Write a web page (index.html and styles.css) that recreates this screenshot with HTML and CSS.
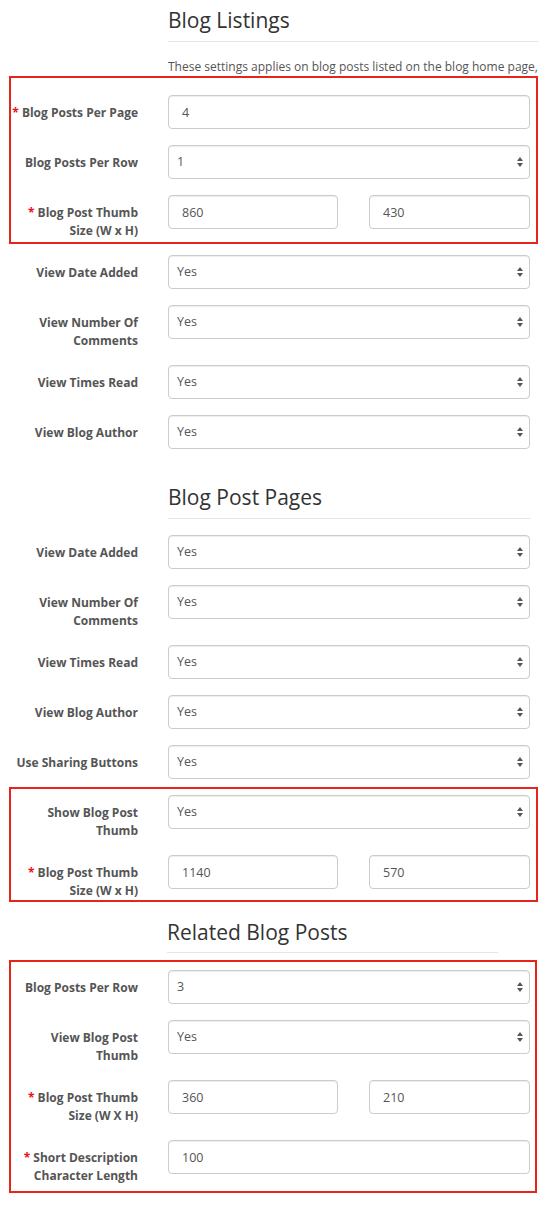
FILE: index.html
```html
<!DOCTYPE html>
<html lang="en">
<head>
<meta charset="utf-8">
<title>Blog Settings</title>
<link rel="stylesheet" href="styles.css">
</head>
<body>
<div class="page">

  <div class="head head-1">
    <h2 class="title">Blog Listings</h2>
    <p class="desc">These settings applies on blog posts listed on the blog home page,</p>
  </div>

  <div class="form">
    <div class="mark mark-1">
      <div class="row">
        <label class="lbl"><span class="req">*</span> Blog Posts Per Page</label>
        <div class="ctl"><input class="field" type="text" value="4"></div>
      </div>
      <div class="row">
        <label class="lbl">Blog Posts Per Row</label>
        <div class="ctl"><span class="sel"><select class="field select"><option>1</option></select></span></div>
      </div>
      <div class="row">
        <label class="lbl"><span class="req">*</span> Blog Post Thumb Size (W x H)</label>
        <div class="ctl pair"><input class="field" type="text" value="860"><input class="field" type="text" value="430"></div>
      </div>
    </div>
    <div class="row">
      <label class="lbl">View Date Added</label>
      <div class="ctl"><span class="sel"><select class="field select"><option>Yes</option></select></span></div>
    </div>
    <div class="row">
      <label class="lbl">View Number Of Comments</label>
      <div class="ctl"><span class="sel"><select class="field select"><option>Yes</option></select></span></div>
    </div>
    <div class="row">
      <label class="lbl">View Times Read</label>
      <div class="ctl"><span class="sel"><select class="field select"><option>Yes</option></select></span></div>
    </div>
    <div class="row">
      <label class="lbl">View Blog Author</label>
      <div class="ctl"><span class="sel"><select class="field select"><option>Yes</option></select></span></div>
    </div>
  </div>

  <div class="head head-2">
    <h2 class="title">Blog Post Pages</h2>
  </div>

  <div class="form">
    <div class="row">
      <label class="lbl">View Date Added</label>
      <div class="ctl"><span class="sel"><select class="field select"><option>Yes</option></select></span></div>
    </div>
    <div class="row">
      <label class="lbl">View Number Of Comments</label>
      <div class="ctl"><span class="sel"><select class="field select"><option>Yes</option></select></span></div>
    </div>
    <div class="row">
      <label class="lbl">View Times Read</label>
      <div class="ctl"><span class="sel"><select class="field select"><option>Yes</option></select></span></div>
    </div>
    <div class="row">
      <label class="lbl">View Blog Author</label>
      <div class="ctl"><span class="sel"><select class="field select"><option>Yes</option></select></span></div>
    </div>
    <div class="row">
      <label class="lbl">Use Sharing Buttons</label>
      <div class="ctl"><span class="sel"><select class="field select"><option>Yes</option></select></span></div>
    </div>
    <div class="mark mark-2">
      <div class="row">
        <label class="lbl">Show Blog Post Thumb</label>
        <div class="ctl"><span class="sel"><select class="field select"><option>Yes</option></select></span></div>
      </div>
      <div class="row">
        <label class="lbl"><span class="req">*</span> Blog Post Thumb Size (W x H)</label>
        <div class="ctl pair"><input class="field" type="text" value="1140"><input class="field" type="text" value="570"></div>
      </div>
    </div>
  </div>

  <div class="head head-3">
    <h2 class="title">Related Blog Posts</h2>
  </div>

  <div class="form">
    <div class="mark mark-3">
      <div class="row">
        <label class="lbl">Blog Posts Per Row</label>
        <div class="ctl"><span class="sel"><select class="field select"><option>3</option></select></span></div>
      </div>
      <div class="row">
        <label class="lbl">View Blog Post Thumb</label>
        <div class="ctl"><span class="sel"><select class="field select"><option>Yes</option></select></span></div>
      </div>
      <div class="row">
        <label class="lbl"><span class="req">*</span> Blog Post Thumb Size (W X H)</label>
        <div class="ctl pair"><input class="field" type="text" value="360"><input class="field" type="text" value="210"></div>
      </div>
      <div class="row">
        <label class="lbl"><span class="req">*</span> Short Description Character Length</label>
        <div class="ctl"><input class="field" type="text" value="100"></div>
      </div>
    </div>
  </div>

</div>
</body>
</html>
```

FILE: styles.css
```css
* { box-sizing: border-box; }

html, body {
  margin: 0;
  padding: 0;
  background: #fff;
}

body {
  font-family: "Open Sans", "Noto Sans", "Liberation Sans", sans-serif;
  color: #555;
}

.page {
  width: 543px;
  min-height: 1208px;
  overflow: hidden;
}

/* section headers */
.head {
  padding-left: 168px;
}

.title {
  margin: 0;
  font-size: 21px;
  font-weight: 400;
  line-height: 28px;
  color: #333;
  padding-bottom: 7px;
  border-bottom: 1px solid #e5e5e5;
}

.head-1 {
  padding-top: 6px;
  width: 538px;
  margin-bottom: 19px;
}

.desc {
  margin: 16px 0 0;
  font-size: 12px;
  line-height: 18px;
  color: #555;
  white-space: nowrap;
}

.head-2 {
  width: 530px;
  margin-top: 34px;
  margin-bottom: 16px;
}

.head-3 {
  width: 498px;
  padding-left: 167px;
  margin-top: 19px;
  margin-bottom: 17px;
}
.head-3 .title { padding-bottom: 6px; }

/* form rows */
.form,
.mark {
  display: flex;
  flex-direction: column;
  gap: 16px;
}

.row {
  display: grid;
  grid-template-columns: 130px 362px;
  column-gap: 30px;
  padding-left: 8px;
  align-items: start;
}

.lbl {
  display: block;
  text-align: right;
  font-size: 12px;
  font-weight: 700;
  line-height: 18px;
  padding-top: 9px;
  margin-bottom: -1px;
  color: #555;
}

.req {
  color: #e8111a;
}

.ctl {
  display: block;
}

.pair {
  display: grid;
  grid-template-columns: 170px 161px;
  column-gap: 31px;
}

.field {
  display: block;
  width: 100%;
  height: 34px;
  margin: 0;
  padding: 0 12px 0 13px;
  font-family: "Open Sans", "Noto Sans", "Liberation Sans", sans-serif;
  font-size: 12.5px;
  color: #555;
  background: #fff;
  border: 1px solid #ccc;
  border-radius: 4px;
  box-shadow: inset 0 1px 1px rgba(0, 0, 0, 0.075);
  outline: none;
}

.select {
  -webkit-appearance: none;
  appearance: none;
  padding-left: 8px;
  padding-bottom: 1px;
}

/* select arrows (overlay) */
.sel {
  position: relative;
  display: block;
}

.sel::before,
.sel::after {
  content: "";
  position: absolute;
  right: 7px;
  width: 0;
  height: 0;
  border-left: 3px solid transparent;
  border-right: 3px solid transparent;
  pointer-events: none;
}

.sel::before {
  top: 12px;
  border-bottom: 4px solid #555;
}

.sel::after {
  top: 18px;
  border-top: 4px solid #555;
}

/* red annotation frames (overlay) */
.mark {
  position: relative;
}

.mark::after {
  content: "";
  position: absolute;
  left: 9px;
  right: 5px;
  border: 2px solid #e5241c;
  pointer-events: none;
}

.mark-1::after { top: -19px; bottom: -5px; }
.mark-2::after { top: -8px; bottom: -3px; }
.mark-3::after { top: -10px; bottom: -9px; right: 6px; }
```
